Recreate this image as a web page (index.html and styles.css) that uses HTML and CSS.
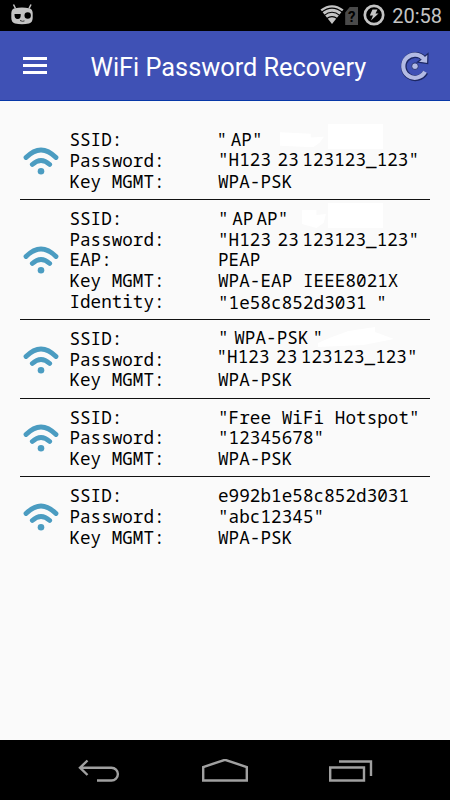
FILE: index.html
```html
<!DOCTYPE html>
<html lang="en">
<head>
  <meta charset="UTF-8" />
  <meta name="viewport" content="width=device-width, initial-scale=1.0"/>
  <title>WiFi Password Recovery</title>
  <link rel="stylesheet" href="styles.css">
</head>
<body>

<svg class="defs" width="0" height="0">
  <symbol id="wifi" viewBox="0 0 36 28">
    <path d="M3 10.500Q18 -4.500 33 10.500M9.300 17.500Q18 9.500 26.700 17.500" fill="none" stroke="#4b9cc1" stroke-width="4.800" stroke-linecap="round"/>
    <circle cx="18" cy="24.200" r="3.300" fill="#4b9cc1"/>
  </symbol>
</svg>

<div class="status-bar">
  <svg class="robot" width="24" height="22" viewBox="0 0 24 22">
    <path d="M3.500 .5l2 4M21 .5l-2 4" stroke="#c4c4c4" stroke-width="1.500"/>
    <path d="M5 4.200Q12 2.800 19 4.200Q22.500 5 22.700 9V14Q22.500 18.500 19 19.500Q12 20.800 5 19.500Q1.500 18.500 1.300 14V9Q1.500 5 5 4.200Z" fill="#c4c4c4"/>
    <path d="M4.500 10h6.200q.5 5-3 5t-3.200-5z" fill="#000"/>
    <circle cx="17.700" cy="11.500" r="3.200" fill="#000"/>
    <path d="M10 16.500l2.500.8 2-.4" fill="none" stroke="#333" stroke-width="1"/>
  </svg>
  <div class="status-right">
    <svg class="signal" width="24" height="20" viewBox="0 0 24 20">
      <path d="M.5 4.500Q12-4 23.500 4.500L12 19Z" fill="#c4c4c4"/>
      <path d="M1.500 7.200Q12-1 22.500 7.200M4 10.600Q12 4 20 10.600M6.500 13.700Q12 9.500 17.500 13.700" fill="none" stroke="#000" stroke-width="1.100"/>
    </svg>
    <div class="sim">?</div>
    <svg class="battery" width="22" height="22" viewBox="0 0 22 22">
      <circle cx="11" cy="11" r="9.200" fill="none" stroke="#c4c4c4" stroke-width="2.700"/>
      <path d="M9.500 5.500h5l-2 4h3l-7.500 7 2-5H6.800z" fill="#c4c4c4"/>
    </svg>
    <span class="clock">20:58</span>
  </div>
</div>

<div class="toolbar">
  <div class="menu"><i></i><i></i><i></i></div>
  <h1>WiFi Password Recovery</h1>
  <svg class="refresh" width="30" height="32" viewBox="0 0 30 32">
    <path d="M26.500 22.300A11.600 11.600 0 1 1 24.500 8.300" fill="none" stroke="#1c2763" stroke-width="5.800"/>
    <path d="M29 3.500L28.700 13.500L18.500 12L22 9.500L25.500 6.500Z" fill="#b3bbe4" stroke="#1c2763" stroke-width="1.200"/>
    <path d="M26 21.800A11.600 11.600 0 1 1 25 9" fill="none" stroke="#b3bbe4" stroke-width="4.200"/>
    <circle cx="16" cy="16.200" r="3.300" fill="#b3bbe4" stroke="#1c2763" stroke-width=".8"/>
  </svg>
</div>

<div class="network-list">
  <div class="network">
    <span class="patch patch-a"></span><span class="patch patch-b"></span>
    <svg class="wifi"><use href="#wifi"/></svg>
    <dl>
      <dt>SSID:</dt><dd class="tight left">" AP"</dd>
      <dt>Password:</dt><dd class="up">"H123<span class="mid">23</span>123123_123"</dd>
      <dt>Key MGMT:</dt><dd>WPA-PSK</dd>
    </dl>
  </div>
  <div class="network">
    <span class="patch patch-d"></span><span class="patch patch-b"></span>
    <svg class="wifi"><use href="#wifi"/></svg>
    <dl>
      <dt>SSID:</dt><dd class="tight">" AP<span class="gap">AP"</span></dd>
      <dt>Password:</dt><dd>"H123<span class="mid">23</span>123123_123"</dd>
      <dt>EAP:</dt><dd>PEAP</dd>
      <dt>Key MGMT:</dt><dd>WPA-EAP IEEE8021X</dd>
      <dt>Identity:</dt><dd class="down">"1e58c852d3031<span class="quote">"</span></dd>
    </dl>
  </div>
  <div class="network">
    <span class="patch patch-c"></span>
    <svg class="wifi"><use href="#wifi"/></svg>
    <dl>
      <dt>SSID:</dt><dd class="tight up">" <span class="name">WPA-PSK</span><span class="gap">"</span></dd>
      <dt>Password:</dt><dd class="left high">"H123<span class="mid">23</span>123123_123"</dd>
      <dt>Key MGMT:</dt><dd>WPA-PSK</dd>
    </dl>
  </div>
  <div class="network">
    <svg class="wifi"><use href="#wifi"/></svg>
    <dl>
      <dt>SSID:</dt><dd>"Free WiFi Hotspot"</dd>
      <dt>Password:</dt><dd>"12345678"</dd>
      <dt>Key MGMT:</dt><dd>WPA-PSK</dd>
    </dl>
  </div>
  <div class="network">
    <svg class="wifi"><use href="#wifi"/></svg>
    <dl>
      <dt>SSID:</dt><dd>e992b1e58c852d3031</dd>
      <dt>Password:</dt><dd>"abc12345"</dd>
      <dt>Key MGMT:</dt><dd>WPA-PSK</dd>
    </dl>
  </div>
</div>

<div class="nav-bar">
  <svg width="44" height="26" viewBox="0 0 44 26">
    <path d="M10.500 1.500L3 8.700L10.500 16M4 8.700H34.500A6.400 6.400 0 0 1 34.500 21.500H20" />
  </svg>
  <svg width="48" height="26" viewBox="0 0 48 26">
    <path d="M2.200 21.500V8L24 .8L45.800 8V21.500Z" />
  </svg>
  <svg width="44" height="26" viewBox="0 0 44 26">
    <path d="M1.200 8.500H35V21.500H1.200ZM10 2.500H42V17" />
  </svg>
</div>

</body>
</html>
```
FILE: styles.css
```css
body {
  margin: 0;
  height: 800px;
  display: flex;
  flex-direction: column;
  background: #fafafa;
  font-family: Roboto, sans-serif;
  overflow: hidden;
}
.defs {
  position: absolute;
}
.status-bar {
  height: 31px;
  flex: none;
  display: flex;
  justify-content: space-between;
  background: #000;
  padding: 0 8px 0 10px;
}
.robot {
  margin-top: 4px;
}
.status-right {
  display: flex;
  align-items: flex-start;
}
.signal {
  margin-top: 5px;
}
.sim {
  width: 13px;
  height: 18px;
  margin: 7px 5px 0 1px;
  background: #4a4a4a;
  clip-path: polygon(35% 0, 100% 0, 100% 100%, 0 100%, 0 30%);
  color: #000;
  font-size: 15px;
  font-weight: bold;
  line-height: 20px;
  text-align: center;
}
.battery {
  margin-top: 4px;
}
.clock {
  margin-left: 7px;
  color: #c4c4c4;
  font-size: 20px;
  line-height: 33px;
}
.toolbar {
  height: 69px;
  flex: none;
  display: flex;
  align-items: center;
  background: #3f51b5;
  border-bottom: 1px solid #0838a8;
  padding: 0 21px 0 23px;
}
.menu {
  width: 24px;
  display: flex;
  flex-direction: column;
  gap: 4px;
}
.menu i {
  height: 3px;
  background: #fff;
}
.toolbar h1 {
  flex: 1;
  margin: 3px 0 0 43.5px;
  color: #fff;
  font-size: 25.3px;
  font-weight: normal;
  white-space: nowrap;
}
.refresh {
  margin-top: 1px;
}
.network-list {
  flex: 1;
  padding: 20.3px 20px 0;
}
.network {
  position: relative;
  display: flex;
  align-items: center;
  padding: 8px 0 7.6px;
  border-bottom: 1px solid #111;
}
.network:last-child {
  border-bottom: none;
}
.wifi {
  width: 36px;
  height: 28px;
  margin: 1px 10.5px 0 3px;
}
.network dl {
  position: relative;
  flex: 1;
  display: grid;
  grid-template-columns: 148.5px 1fr;
  grid-auto-rows: 20.7px;
  margin: 0;
  color: #000;
  font-family: "Droid Sans Mono", "Noto Sans Mono", "DejaVu Sans Mono", monospace;
  font-size: 17.6px;
  line-height: 20.7px;
  white-space: pre;
}
.network dd {
  margin: 0;
  letter-spacing: 0.06px;
}
.network .tight {
  word-spacing: -7px;
}
.network .left {
  margin-left: -1.5px;
}
.network .up {
  margin-top: -1px;
}
.network .high {
  margin-top: -3px;
}
.network .down {
  margin-top: 1px;
}
.mid {
  margin: 0 3.5px 0 6.5px;
}
.gap {
  margin-left: 3px;
}
.name {
  margin: 0 1px 0 2px;
}
.quote {
  margin-left: 9.5px;
}
/* lighter blotches behind the values */
.patch {
  position: absolute;
  background: #fff;
}
.patch-a {
  left: 260px;
  top: 11px;
  width: 44px;
  height: 15px;
  clip-path: polygon(0 0, 70% 10%, 70% 35%, 100% 30%, 90% 70%, 75% 100%, 0 90%);
}
.patch-b {
  left: 308px;
  top: 3px;
  width: 55px;
  height: 25px;
}
.patch-c {
  left: 298px;
  top: 7px;
  width: 76px;
  height: 20px;
  clip-path: polygon(0 80%, 15% 55%, 40% 20%, 75% 0, 75% 25%, 100% 60%, 60% 90%, 0 100%);
}
.patch-d {
  left: 282px;
  top: 8px;
  width: 24px;
  height: 20px;
  clip-path: polygon(0 10%, 60% 10%, 60% 35%, 100% 30%, 90% 75%, 60% 100%, 0 80%);
}
.nav-bar {
  height: 56px;
  flex: none;
  display: flex;
  justify-content: space-between;
  align-items: center;
  background: #000;
  padding: 4px 77px 0 77px;
}
.nav-bar svg {
  fill: none;
  stroke: #a0a0a0;
  stroke-width: 2.4;
}
```
